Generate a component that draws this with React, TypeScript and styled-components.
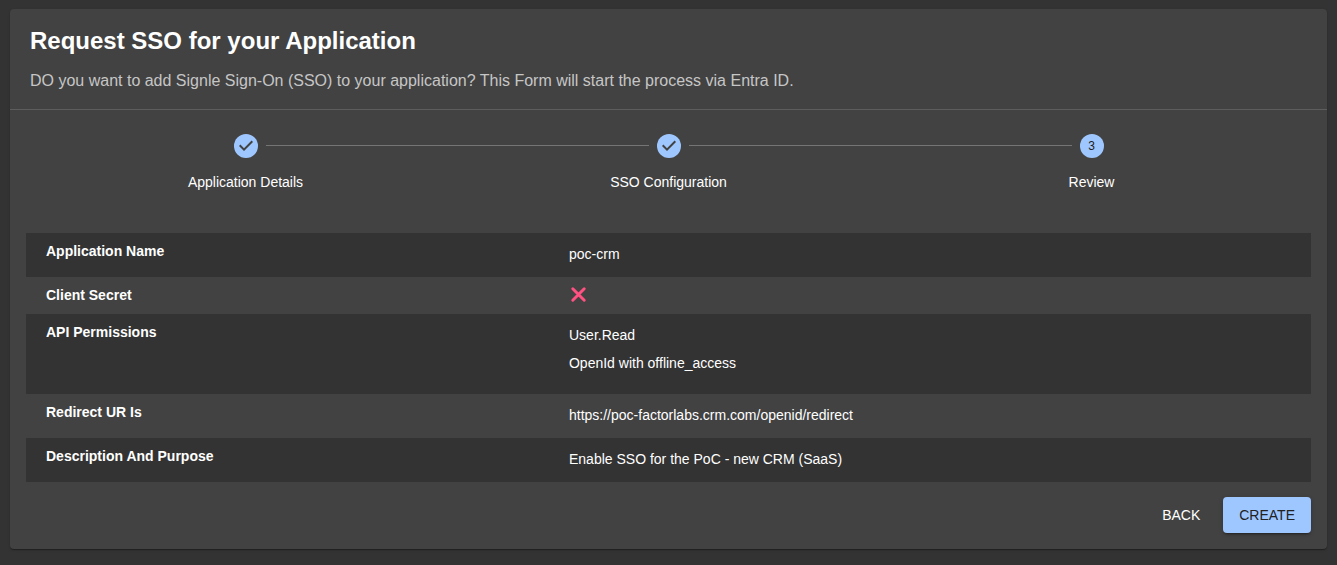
import React from 'react';
import styled, { createGlobalStyle } from 'styled-components';

const GlobalStyle = createGlobalStyle`
  * {
    box-sizing: border-box;
  }
  body {
    margin: 0;
    background: #333333;
    color: #ffffff;
    font-family: 'Liberation Sans', Arial, sans-serif;
    font-size: 14px;
    line-height: 20px;
  }
`;

const Page = styled.main`
  padding: 9px 10px 16px;
`;

const Card = styled.section`
  background: #424242;
  border-radius: 4px;
  box-shadow: 0 2px 1px -1px rgba(0, 0, 0, 0.2), 0 1px 1px rgba(0, 0, 0, 0.14),
    0 1px 3px rgba(0, 0, 0, 0.12);
`;

const CardHeader = styled.header`
  padding: 16px 20px;
  border-bottom: 1px solid #5d5d5d;
`;

const Title = styled.h1`
  margin: 0 0 12px;
  font-size: 24px;
  line-height: 32px;
  font-weight: 700;
`;

const Subtitle = styled.p`
  margin: 0;
  font-size: 16px;
  line-height: 24px;
  color: #c6c6c6;
`;

const Stepper = styled.ol`
  display: flex;
  margin: 0;
  padding: 24px;
  list-style: none;
`;

const StepItem = styled.li`
  flex: 1;
  display: flex;
  flex-direction: column;
  align-items: center;
  gap: 14px;
`;

const StepTrack = styled.div`
  display: flex;
  align-items: center;
  align-self: stretch;
  gap: 8px;
`;

const Connector = styled.span<{ $hidden?: boolean }>`
  flex: 1;
  height: 2px;
  border-top: 1px solid ${({ $hidden }) => ($hidden ? 'transparent' : '#757575')};
`;

const StepBadge = styled.span`
  display: flex;
  align-items: center;
  justify-content: center;
  width: 24px;
  height: 24px;
  border-radius: 50%;
  background: #9fc7ff;
  color: #212121;
  font-size: 12px;
`;

const StepLabel = styled.span`
  font-weight: 400;
`;

const CardContent = styled.div`
  padding: 17px 16px 16px;
`;

const ReviewTable = styled.table`
  width: 100%;
  border-collapse: collapse;
  table-layout: fixed;
`;

const ReviewRow = styled.tr`
  &:nth-child(odd) {
    background: #333333;
  }
`;

const NameCell = styled.th`
  width: 40.7%;
  padding: 8px 20px;
  text-align: left;
  vertical-align: top;
  font-weight: 700;
`;

const ValueCell = styled.td<{ $icon?: boolean }>`
  padding: ${({ $icon }) => ($icon ? '8px 20px 9px' : '11px 20px 13px')};
  vertical-align: top;
`;

const ValueList = styled.ul`
  display: flex;
  flex-direction: column;
  gap: 8px;
  margin: 0;
  padding: 0 0 8px;
  list-style: none;
`;

const CrossIcon = styled.svg`
  display: block;
  width: 20px;
  height: 20px;
`;

const Actions = styled.div`
  display: flex;
  justify-content: flex-end;
  gap: 10px;
  padding-top: 15px;
`;

const ActionButton = styled.button<{ $primary?: boolean }>`
  min-width: 64px;
  height: 36px;
  padding: 0 ${({ $primary }) => ($primary ? '16px' : '8px')};
  border: 0;
  border-radius: 4px;
  background: ${({ $primary }) => ($primary ? '#9fc7ff' : 'transparent')};
  color: ${({ $primary }) => ($primary ? '#212121' : '#ffffff')};
  box-shadow: ${({ $primary }) =>
    $primary
      ? '0 3px 1px -2px rgba(0, 0, 0, 0.2), 0 2px 2px rgba(0, 0, 0, 0.14), 0 1px 5px rgba(0, 0, 0, 0.12)'
      : 'none'};
  font: inherit;
  text-transform: uppercase;
  cursor: pointer;
`;

const steps = [
  { label: 'Application Details', done: true },
  { label: 'SSO Configuration', done: true },
  { label: 'Review', done: false },
];

const rows: { name: string; value: string | string[] | false }[] = [
  { name: 'Application Name', value: 'poc-crm' },
  { name: 'Client Secret', value: false },
  { name: 'API Permissions', value: ['User.Read', 'OpenId with offline_access'] },
  { name: 'Redirect UR Is', value: 'https://poc-factorlabs.crm.com/openid/redirect' },
  { name: 'Description And Purpose', value: 'Enable SSO for the PoC - new CRM (SaaS)' },
];

function Check() {
  return (
    <svg width="24" height="24" viewBox="0 0 24 24" aria-hidden="true">
      <path d="M10 17l-5-5 1.4-1.4 3.6 3.6 7.6-7.6L19 8l-9 9z" fill="#424242" />
    </svg>
  );
}

function Value({ value }: { value: string | string[] | false }) {
  if (value === false) {
    return (
      <CrossIcon viewBox="0 0 20 20" role="img" aria-label="No">
        <path
          d="M3.8 3.8L15.2 15.2M15.2 3.8L3.8 15.2"
          stroke="#ff5182"
          strokeWidth="3"
          strokeLinecap="round"
          fill="none"
        />
      </CrossIcon>
    );
  }
  if (Array.isArray(value)) {
    return (
      <ValueList>
        {value.map((item) => (
          <li key={item}>{item}</li>
        ))}
      </ValueList>
    );
  }
  return <>{value}</>;
}

export default function App() {
  return (
    <>
      <GlobalStyle />
      <Page>
        <Card>
          <CardHeader>
            <Title>Request SSO for your Application</Title>
            <Subtitle>
              DO you want to add Signle Sign-On (SSO) to your application? This Form will start the
              process via Entra ID.
            </Subtitle>
          </CardHeader>
          <Stepper>
            {steps.map((step, index) => (
              <StepItem key={step.label} aria-current={step.done ? undefined : 'step'}>
                <StepTrack>
                  <Connector $hidden={index === 0} />
                  <StepBadge>{step.done ? <Check /> : index + 1}</StepBadge>
                  <Connector $hidden={index === steps.length - 1} />
                </StepTrack>
                <StepLabel>{step.label}</StepLabel>
              </StepItem>
            ))}
          </Stepper>
          <CardContent>
            <ReviewTable>
              <tbody>
                {rows.map((row) => (
                  <ReviewRow key={row.name}>
                    <NameCell scope="row">{row.name}</NameCell>
                    <ValueCell $icon={row.value === false}>
                      <Value value={row.value} />
                    </ValueCell>
                  </ReviewRow>
                ))}
              </tbody>
            </ReviewTable>
            <Actions>
              <ActionButton type="button">Back</ActionButton>
              <ActionButton type="button" $primary>
                Create
              </ActionButton>
            </Actions>
          </CardContent>
        </Card>
      </Page>
    </>
  );
}
